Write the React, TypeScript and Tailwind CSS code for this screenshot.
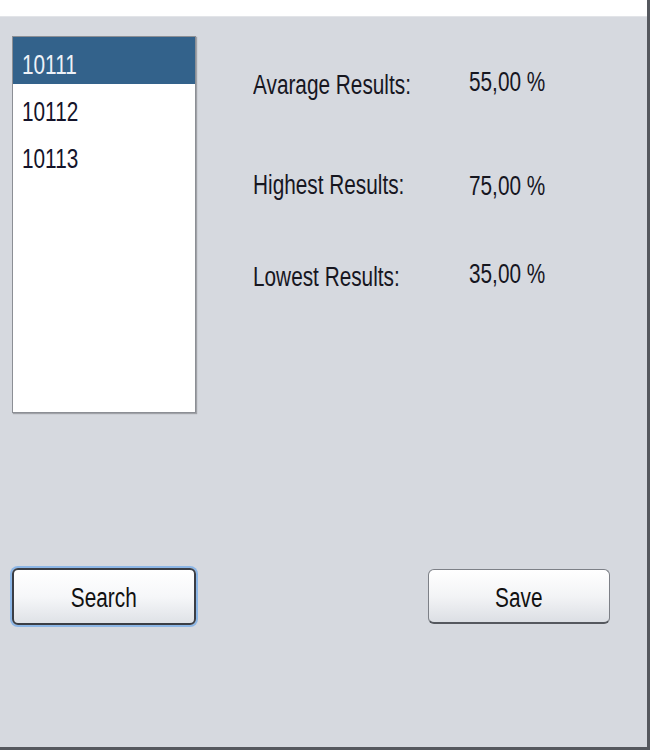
import React from "react";

const font = { fontFamily: '"Liberation Sans", Arial, sans-serif' };

function T({ children, center = false, className = "" }: { children: React.ReactNode; center?: boolean; className?: string }) {
  return (
    <span
      className={`inline-block scale-x-[0.77] whitespace-nowrap ${center ? "origin-center" : "origin-left"} ${className}`}
    >
      {children}
    </span>
  );
}

export default function App() {
  const items = ["10111", "10112", "10113"];
  const stats: [string, string, string, string][] = [
    ["Avarage Results:", "55,00 %", "mt-[34px]", "mt-[-3px]"],
    ["Highest Results:", "75,00 %", "mt-[70px]", "mt-[1px]"],
    ["Lowest Results:", "35,00 %", "mt-[61px]", "mt-[-3px]"],
  ];
  return (
    <div
      className="w-[650px] h-[750px] bg-[#d6d9df] flex flex-col border-r-[3px] border-b-[3px] border-[#55585e] text-[27px] leading-[30px] text-[#16161f]"
      style={font}
    >
      <div className="h-[17px] bg-white border-b border-[#e2e4e8]" />
      <div className="flex pt-[19px] pl-[12px]">
        <div className="w-[184px] h-[377px] bg-white border border-[#8c8f95] shadow-[1px_1px_1px_rgba(0,0,0,0.25)] flex flex-col">
          {items.map((it, i) => (
            <div
              key={it}
              className={`h-[47px] flex items-center pl-[9px] ${i === 0 ? "bg-[#33628b] text-[#eef2f8]" : "text-[#14142a]"}`}
            >
              <T className="mt-[8px]">{it}</T>
            </div>
          ))}
        </div>
        <div className="ml-[57px] flex flex-col">
          {stats.map(([l, v, m, vm]) => (
            <div key={l} className={`flex items-start ${m}`}>
              <div className="w-[216px]">
                <T>{l}</T>
              </div>
              <div className={vm}>
                <T>{v}</T>
              </div>
            </div>
          ))}
        </div>
      </div>
      <div className="flex mt-[155px] pl-[12px]">
        <button
          className="w-[184px] h-[57px] rounded-[6px] border-2 border-[#3b3e45] bg-linear-to-b from-white via-[#f6f7f9] to-[#dfe2e7] shadow-[0_0_0_2px_#8cb6e6] flex items-center justify-center text-[#111]"
          style={font}
        >
          <T center className="mt-[3px]">Search</T>
        </button>
        <button
          className="ml-[232px] mt-[1px] w-[182px] h-[55px] rounded-[6px] border border-[#7d8087] border-b-2 border-b-[#55585e] bg-linear-to-b from-white via-[#f3f4f6] to-[#dcdfe4] flex items-center justify-center text-[#111]"
          style={font}
        >
          <T center className="mt-[3px]">Save</T>
        </button>
      </div>
    </div>
  );
}
